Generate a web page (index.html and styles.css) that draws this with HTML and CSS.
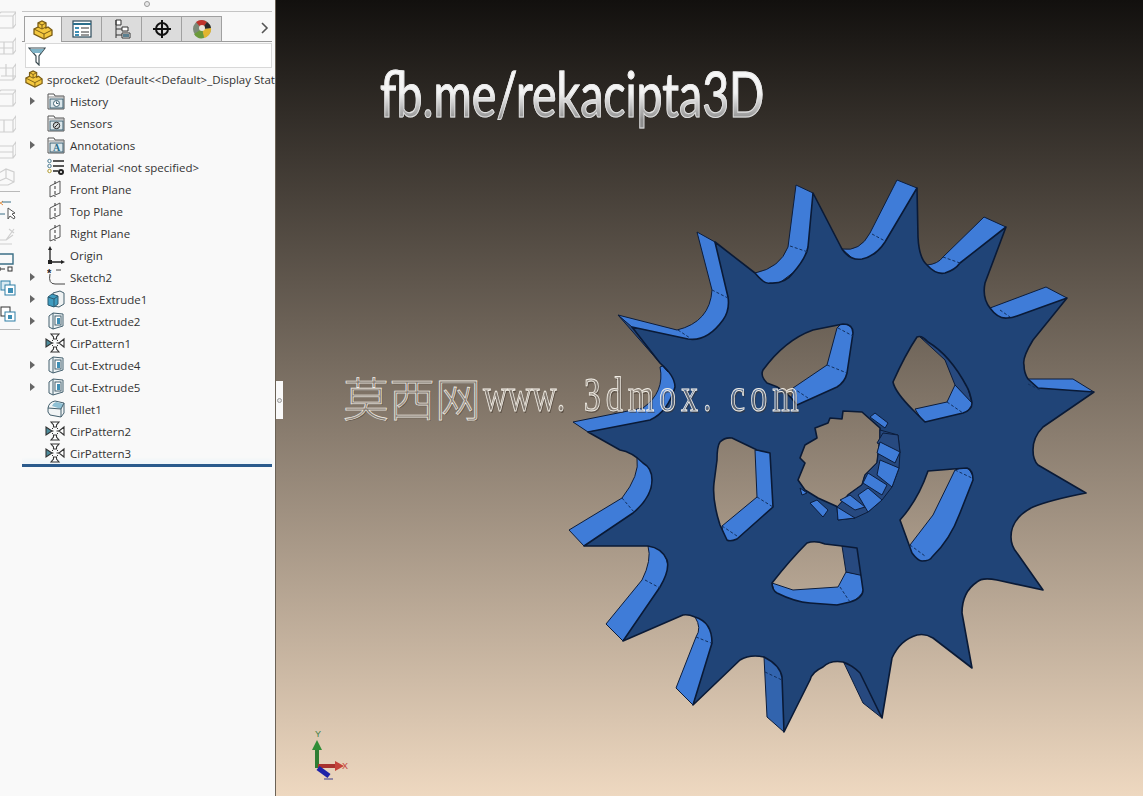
FILE: index.html
```html
<!DOCTYPE html>
<html lang="en">
<head>
    <meta charset="UTF-8">
    <title>sprocket2</title>
    <link rel="stylesheet" href="styles.css">
</head>
<body>
    <svg class="defs" width="0" height="0">
        <defs>
            <symbol id="ic-part" viewBox="0 0 20 20">
                <path d="M1 9 L5 7 L5 3 L9 1 L13 3 L13 8 L15 7 L19 10 L19 15 L11 19 L1 14 Z" fill="#f4c83f" stroke="#7a5c14" stroke-width="1.3"/>
                <path d="M5 7 L9 9 L13 7 M9 9 L9 5 L5 3 M9 5 L13 3 M1 9 L11 14 L19 10 M11 14 L11 19" fill="none" stroke="#7a5c14"/>
            </symbol>
            <symbol id="ic-folder" viewBox="0 0 18 18">
                <path d="M1 17 L1 2 L7 2 L8 4 L17 4 L17 17 Z" fill="#fbfbfb" stroke="#555"/>
                <path d="M1 5 L17 5" stroke="#888"/>
                <rect x="3" y="7" width="13" height="9" fill="#dbe6ea" stroke="#3b5f70"/>
            </symbol>
            <symbol id="ic-plane" viewBox="0 0 18 18">
                <path d="M3 6 L9 3 L13 1 L13 13 L3 17 Z" fill="none" stroke="#555"/>
                <path d="M8 1 L8 17" stroke="#333" stroke-dasharray="3 2"/>
            </symbol>
            <symbol id="ic-cut" viewBox="0 0 18 18">
                <path d="M2 4 L6 1 L16 2 L16 14 L6 17 L2 15 Z" fill="#eef3f5" stroke="#44606e"/>
                <path d="M6 1 L6 17" stroke="#44606e"/>
                <rect x="8" y="4" width="6" height="9" fill="#fff" stroke="#44606e"/>
                <rect x="10" y="6" width="3" height="6" fill="#3f8fb5"/>
            </symbol>
            <symbol id="ic-pattern" viewBox="0 0 20 20">
                <path d="M6 1 H14 L11.500 4 V6 H8.500 V4 Z M6 19 H14 L11.500 16 V14 H8.500 V16 Z M19 6 V14 L14 10 Z" fill="#fff" stroke="#333" stroke-width="1.1"/>
                <path d="M1 6 L1 14 L7 10 Z" fill="#4d8c9c" stroke="#333" stroke-width="1.1"/>
                <path d="M7 10 H8.500 M11.500 10 H14 M8 7 L7 8 M12 7 L13 8 M8 13 L7 12 M12 13 L13 12" stroke="#333"/>
            </symbol>
        </defs>
    </svg>

    <div class="app">
        <aside class="sidebar">
            <div class="strip">
                <div class="strip-group">
                    <svg class="strip-icon" viewBox="0 0 16 20"><path class="ghost" d="M-3 6 H13 V18 H-3 M-3 6 L1 2 H16 V14 L13 18 M13 6 L16 2"/></svg>
                    <svg class="strip-icon" viewBox="0 0 16 20"><path class="ghost" d="M-3 6 H13 V18 H-3 M4 6 V18 M-3 12 H13 M13 6 L16 2 V14 L13 18"/></svg>
                    <svg class="strip-icon" viewBox="0 0 16 20"><path class="ghost" d="M-3 6 H13 V18 H-3 M6 2 V14 M1 14 H16 M13 6 L16 2 V14 L13 18"/></svg>
                    <svg class="strip-icon" viewBox="0 0 16 20"><path class="ghost" d="M-3 6 H13 V18 H-3 M-3 6 L1 2 H16 V14 L13 18 M13 6 L16 2"/></svg>
                    <svg class="strip-icon" viewBox="0 0 16 20"><path class="ghost" d="M-3 6 H13 V18 H-3 M4 6 V18 M13 6 L16 2 V14 L13 18"/></svg>
                    <svg class="strip-icon" viewBox="0 0 16 20"><path class="ghost" d="M-3 6 H13 V18 H-3 M-3 12 H13 M13 6 L16 2 V14 L13 18"/></svg>
                    <svg class="strip-icon" viewBox="0 0 16 20"><path class="ghost" d="M-3 8 L6 3 L14 6 V16 L8 19 H-3 M6 3 V12 L14 16 M6 12 L-3 16"/></svg>
                </div>
                <div class="strip-sep"></div>
                <div class="strip-group">
                    <svg class="strip-icon" viewBox="0 0 16 20">
                        <path d="M-2 1 L3 5 M3 1 L-2 5" stroke="#e08a3c" fill="none"/>
                        <path d="M2 2 H11 M0 14 H5" stroke="#3b6f86" fill="none"/>
                        <path d="M8 8 L8 19 L10 16 L14 19 L15 17 L12 14 L15 13 Z" fill="#fff" stroke="#555"/>
                    </svg>
                    <svg class="strip-icon" viewBox="0 0 16 20"><path class="ghost" d="M-3 14 L6 14 L14 3 M6 14 L13 9 M-3 18 H12 M9 3 L14 7"/></svg>
                    <svg class="strip-icon" viewBox="0 0 16 20">
                        <path d="M-3 2 H13 V12 H-3" fill="none" stroke="#3b6f86" stroke-width="1.4"/>
                        <path d="M0 15 V19 M-2 17 H5" stroke="#333" fill="none"/>
                        <rect x="8" y="15" width="4" height="4" fill="none" stroke="#333"/>
                    </svg>
                    <svg class="strip-icon" viewBox="0 0 16 20">
                        <rect x="1" y="3" width="9" height="9" fill="#d9eaf2" stroke="#2f7fa6"/>
                        <rect x="5" y="7" width="10" height="10" fill="#fff" stroke="#2f7fa6"/>
                        <rect x="8" y="10" width="5" height="5" fill="#3f8fb5"/>
                    </svg>
                    <svg class="strip-icon" viewBox="0 0 16 20">
                        <rect x="1" y="3" width="9" height="9" fill="#fff" stroke="#333"/>
                        <rect x="5" y="8" width="10" height="9" fill="#fff" stroke="#2f7fa6"/>
                        <rect x="8" y="11" width="4" height="4" fill="#3f8fb5"/>
                    </svg>
                </div>
                <div class="strip-sep"></div>
            </div>

            <div class="manager">
                <div class="grip"><span class="grip-dot"></span></div>
                <div class="tabs">
                    <div class="tab tab-active"><svg class="tab-icon"><use href="#ic-part"/></svg></div>
                    <div class="tab">
                        <svg class="tab-icon" viewBox="0 0 20 20">
                            <rect x="1" y="2" width="18" height="16" fill="#fff" stroke="#2c4a5a" stroke-width="1.2"/>
                            <path d="M1 5 H19" stroke="#2c6f8c" stroke-width="2"/>
                            <path d="M3 8 H7 V10 H3 Z M3 12 H7 V14 H3 Z M3 15 H7 V17 H3 Z" fill="#3f8fb5"/>
                            <path d="M9 9 H17 M9 13 H17 M9 16 H17" stroke="#333"/>
                        </svg>
                    </div>
                    <div class="tab">
                        <svg class="tab-icon" viewBox="0 0 20 20">
                            <path d="M4 1 H9 V6 H4 Z M4 1 V19 M10 8 H16 V12 H10 Z M10 14 H18 V19 H10 Z M4 10 H10 M4 16 H10" fill="#fff" stroke="#333"/>
                            <rect x="11" y="15" width="6" height="3" fill="#5a7f90"/>
                        </svg>
                    </div>
                    <div class="tab">
                        <svg class="tab-icon" viewBox="0 0 20 20">
                            <circle cx="10" cy="10" r="6" fill="none" stroke="#111" stroke-width="2"/>
                            <path d="M10 1 V19 M1 10 H19" stroke="#111" stroke-width="2"/>
                        </svg>
                    </div>
                    <div class="tab">
                        <svg class="tab-icon" viewBox="0 0 20 20">
                            <circle cx="10" cy="10" r="9" fill="#7c8a78"/>
                            <path d="M10 10 L4 3 A9 9 0 0 1 15 3 Z" fill="#c0342c"/>
                            <path d="M10 10 L19 9 A9 9 0 0 1 12 19 Z" fill="#e2b52f"/>
                            <path d="M10 10 L12 19 A9 9 0 0 1 2 15 Z" fill="#6b9a3a"/>
                            <path d="M10 10 L15 3 A9 9 0 0 1 19 9 Z" fill="#2b2b2b"/>
                            <circle cx="10" cy="9" r="3" fill="#e9e4da"/>
                        </svg>
                    </div>
                    <svg class="tabs-more" viewBox="0 0 8 12"><path d="M1 1 L6 6 L1 11" fill="none" stroke="#555" stroke-width="1.6"/></svg>
                </div>
                <div class="filter">
                    <svg class="filter-icon" viewBox="0 0 18 20">
                        <path d="M1 2 H17 L11 10 V19 L8 16 V10 Z" fill="#fff" stroke="#3a4a50" stroke-width="1.2"/>
                        <path d="M2 3 H16 L13 7 H5 Z" fill="#7fb4c8"/>
                    </svg>
                </div>
                <div class="root-row">
                    <svg class="root-icon"><use href="#ic-part"/></svg>
                    <span class="root-name">sprocket2&nbsp; (Default&lt;&lt;Default&gt;_Display Stat</span>
                </div>
                <ul class="tree">
                    <li class="row has-kids">
                        <svg class="row-icon" viewBox="0 0 18 18"><use href="#ic-folder"/><circle cx="9.500" cy="11.500" r="3" fill="#fff" stroke="#3b5f70"/><path d="M9.500 9.500 V11.500 H11.500" fill="none" stroke="#3b5f70"/></svg>
                        <span>History</span>
                    </li>
                    <li class="row">
                        <svg class="row-icon" viewBox="0 0 18 18"><use href="#ic-folder"/><circle cx="9.500" cy="11.500" r="3.200" fill="#cfd5d6" stroke="#222"/><path d="M8 13 L11 10" stroke="#222"/></svg>
                        <span>Sensors</span>
                    </li>
                    <li class="row has-kids">
                        <svg class="row-icon" viewBox="0 0 18 18"><use href="#ic-folder"/><text x="6" y="15" class="glyph-a">A</text></svg>
                        <span>Annotations</span>
                    </li>
                    <li class="row">
                        <svg class="row-icon" viewBox="0 0 18 18">
                            <path d="M6 3 H17 M6 8 H17 M6 13 H11" stroke="#222" stroke-width="1.500"/>
                            <circle cx="2.500" cy="3" r="1.700" fill="#fff" stroke="#4a7a90"/>
                            <circle cx="2.500" cy="8" r="1.700" fill="#fff" stroke="#4a7a90"/>
                            <circle cx="2.500" cy="13" r="1.700" fill="#fff" stroke="#b09a30"/>
                            <circle cx="14" cy="14" r="3" fill="#222"/>
                            <circle cx="14" cy="14" r="1" fill="#fff"/>
                        </svg>
                        <span>Material &lt;not specified&gt;</span>
                    </li>
                    <li class="row"><svg class="row-icon"><use href="#ic-plane"/></svg><span>Front Plane</span></li>
                    <li class="row"><svg class="row-icon"><use href="#ic-plane"/></svg><span>Top Plane</span></li>
                    <li class="row"><svg class="row-icon"><use href="#ic-plane"/></svg><span>Right Plane</span></li>
                    <li class="row">
                        <svg class="row-icon" viewBox="0 0 18 18">
                            <path d="M3 16 V2 M3 16 H16" stroke="#222" stroke-width="1.300"/>
                            <path d="M3 0 L5 4 H1 Z M18 16 L14 14 V18 Z" fill="#222"/>
                            <rect x="1" y="14" width="4" height="4" fill="#222"/>
                        </svg>
                        <span>Origin</span>
                    </li>
                    <li class="row has-kids">
                        <svg class="row-icon" viewBox="0 0 18 18">
                            <path d="M3 6 Q1 16 8 16 H18 M9 2 H14" fill="none" stroke="#444"/>
                            <text x="0" y="9" class="glyph-star">*</text>
                        </svg>
                        <span>Sketch2</span>
                    </li>
                    <li class="row has-kids">
                        <svg class="row-icon" viewBox="0 0 18 18">
                            <path d="M6 3 L13 1 L17 3 V14 L12 17 L6 16 Z" fill="#eef1f2" stroke="#44606e"/>
                            <path d="M1 7 L5 4 L11 6 V14 L7 17 L1 15 Z" fill="#3f9cc0" stroke="#2c5a70"/>
                            <path d="M1 7 L7 9 L11 6 M7 9 V17" fill="none" stroke="#2c5a70"/>
                        </svg>
                        <span>Boss-Extrude1</span>
                    </li>
                    <li class="row has-kids"><svg class="row-icon"><use href="#ic-cut"/></svg><span>Cut-Extrude2</span></li>
                    <li class="row"><svg class="row-icon row-icon-wide"><use href="#ic-pattern"/></svg><span>CirPattern1</span></li>
                    <li class="row has-kids"><svg class="row-icon"><use href="#ic-cut"/></svg><span>Cut-Extrude4</span></li>
                    <li class="row has-kids"><svg class="row-icon"><use href="#ic-cut"/></svg><span>Cut-Extrude5</span></li>
                    <li class="row">
                        <svg class="row-icon" viewBox="0 0 18 18">
                            <path d="M1 8 Q2 2 8 1 L17 3 V13 L14 17 L3 15 L1 12 Z" fill="#f1f4f5" stroke="#44606e"/>
                            <path d="M5 6 Q6 3 9 2 L17 4 L14 9 Z" fill="#8fc0d4"/>
                            <path d="M1 8 L14 9 V17 M14 9 L17 3" fill="none" stroke="#44606e"/>
                        </svg>
                        <span>Fillet1</span>
                    </li>
                    <li class="row"><svg class="row-icon row-icon-wide"><use href="#ic-pattern"/></svg><span>CirPattern2</span></li>
                    <li class="row"><svg class="row-icon row-icon-wide"><use href="#ic-pattern"/></svg><span>CirPattern3</span></li>
                </ul>
                <div class="rollback"></div>
            </div>
        </aside>

        <main class="viewport">
            <div class="splitter"><span class="grip-dot"></span></div>

            <svg class="model" viewBox="276 0 867 796" width="867" height="796">
                <!-- tooth walls, under the front face -->
                <g class="walls">
                    <path class="wall" d="M796 185 L788 247 Q780 268 755 273 L770 290 L810 260 L813 193 Z"/>
                    <path class="wall" d="M697 232 L712 290 Q710 322 677 330 L618 315 L633 330 L700 345 L735 310 L715 242 Z"/>
                    <path class="wall" d="M842 249 Q860 252 870 233 L897 180 L917 188 L890 250 L860 265 Z"/>
                    <path class="wall" d="M927 265 Q938 264 943 257 L984 217 L1006 227 L965 270 L940 280 Z"/>
                    <path class="wall" d="M990 308 L1046 287 L1067 298 L1020 322 L1000 322 Z"/>
                    <path class="wall" d="M1028 379 L1073 379 L1094 392 L1040 392 Z"/>
                    <path class="wall-dark" d="M844 663 L863 703 L882 718 L862 670 Z"/>
                    <path class="wall-mid" d="M764 657 L767 717 L784 732 L786 680 L778 660 Z"/>
                    <path class="wall" d="M695 617 Q702 628 696 637 L676 688 L693 705 L716 640 Q712 620 695 612 Z"/>
                    <path class="wall" d="M648 546 Q652 560 642 580 L606 624 L623 641 L664 587 Q674 565 660 546 Z"/>
                    <path class="wall" d="M637 458 Q640 475 622 498 L569 530 L584 546 L636 515 Q658 495 655 470 L640 455 Z"/>
                    <path class="wall" d="M660 367 Q665 392 643 408 L573 422 L588 432 L652 422 Q675 410 678 385 L665 365 Z"/>
                    <path class="wall-dark" d="M618 315 L660 363 L668 372 L632 327 Z"/>
                    <!-- window walls -->
                    <path class="wall" d="M837 328 L827 365 L793 388 L790 410 L840 390 L850 373 L856 330 L843 322 Z"/>
                    <path class="wall" d="M915 409 L947 402 L955 385 L974 403 L963 416 L925 425 Z"/>
                    <path class="wall-dark" d="M920 337 L945 360 L955 385 L972 403 L967 385 L945 352 Z"/>
                    <path class="wall" d="M955 470 L933 515 L910 545 L908 556 L922 564 L936 557 L964 513 L976 480 L967 466 Z"/>
                    <path class="wall" d="M772 583 L793 590 L838 587 L846 572 L864 575 L866 590 L850 605 L810 606 L775 595 Z"/>
                    <path class="wall-dark" d="M842 546 L846 572 L864 576 L858 546 Z"/>
                    <path class="wall" d="M755 450 L757 497 L722 526 L724 542 L738 542 L776 507 L772 452 Z"/>
                </g>
                <path class="face" fill-rule="evenodd" d="M813 193 L842 249 Q850 261 862 259 Q876 256 885 242 L917 188 L918 237 Q919 258 927 265 Q936 275 945 273 Q955 270 960 263 L1006 227 L985 283 Q982 298 990 308 Q998 319 1007 318 Q1012 318 1017 316 L1067 298 L1033 340 Q1022 358 1024 365 Q1024 373 1028 379 L1038 388 L1094 392 L1043 427 Q1033 437 1033 450 Q1033 460 1038 465 L1086 493 Q1050 500 1033 507 Q1011 518 1011 537 Q1011 546 1017 553 L1043 590 L997 580 Q982 577 977 582 Q962 592 962 613 L972 668 L933 638 Q925 633 917 635 Q900 640 892 658 L882 718 L860 673 Q852 665 843 662 Q830 660 823 667 Q812 672 810 680 L784 732 L782 677 Q780 665 764 657 Q750 654 740 660 L693 705 L712 643 Q712 622 695 617 Q688 614 683 615 L623 641 L660 587 Q670 570 667 560 Q662 548 648 546 L584 546 L633 513 Q652 497 652 480 Q652 468 643 463 Q632 452 620 450 L588 432 L650 420 Q668 412 675 387 Q675 376 660 363 L632 327 L688 339 Q707 342 723 320 Q730 310 728 297 L715 242 L755 273 Q765 285 770 283 Q785 284 793 273 Q806 258 808 247 Z
                    M763 370 Q785 340 813 330 L843 324 Q853 324 853 333 L847 373 Q845 382 837 387 L797 405 Q785 388 767 383 Q760 376 763 370 Z
                    M917 337 Q905 355 893 382 Q895 392 913 410 L925 422 L963 413 Q972 410 972 403 Q970 392 967 387 Q950 355 928 342 Q922 335 917 337 Z
                    M928 471 Q918 500 900 520 L912 553 Q918 561 922 561 Q930 561 932 557 Q950 540 960 513 L973 480 Q973 470 967 468 L953 469 Z
                    M807 543 Q790 560 772 583 Q772 590 777 593 Q795 602 810 603 L837 605 L850 602 Q863 598 863 590 L857 548 L842 546 L825 544 Q815 540 807 543 Z
                    M717 460 Q717 446 720 442 Q725 437 732 438 L757 450 L770 453 L773 507 L737 539 Q730 542 727 540 L720 525 Q712 500 714 483 Z
                    M843 411 L842 419 L830 418 L828 423 L815 428 L817 438 L805 445 L800 458 L805 463 L798 480 L805 490 L818 498 L838 507 L848 495 L862 485 L865 475 L877 463 L880 438 L880 428 L862 412 Z"/>
                <!-- keyway teeth of the bore -->
                <g class="spline">
                    <path class="wall-dark" d="M880 430 L898 435 L900 452 L899 468 L892 487 L882 500 L868 512 L855 518 L838 520 L837 507 L848 495 L862 485 L865 475 L877 463 L880 440 Z"/>
                    <path class="wall" d="M870 417 L875 413 L888 423 L885 428 Z"/>
                    <path class="wall-dark" d="M883 433 L898 435 L900 453 L877 443 Z"/>
                    <path class="wall" d="M880 442 L900 452 L895 463 L877 453 Z"/>
                    <path class="wall" d="M880 460 L899 468 L892 487 L877 475 Z"/>
                    <path class="wall" d="M868 473 L887 485 L882 495 L863 483 Z"/>
                    <path class="wall" d="M858 495 L868 488 L882 500 L868 512 Z"/>
                    <path class="wall" d="M840 500 L850 495 L865 507 L855 510 Z"/>
                    <path class="wall" d="M837 507 L855 518 L838 520 Z"/>
                    <path class="wall" d="M810 503 L817 500 L828 510 L823 517 Z"/>
                    <path class="wall" d="M800 488 L807 493 L802 495 Z"/>
                </g>
                <path class="seams" d="M790 246 L808 252 M872 234 L885 241 M943 257 L960 263 M1000 310 L1010 317 M1028 384 L1040 390 M712 290 L728 298 M678 330 L690 338 M827 365 L847 373 M793 388 L808 398 M838 328 L853 336 M757 497 L773 507 M722 526 L737 536 M622 498 L634 512 M645 580 L660 588 M696 637 L711 643 M840 587 L850 602 M910 545 L925 556 M955 470 L972 478 M947 402 L963 413 M765 672 L782 680"/>
                <!-- axis triad -->
                <g class="triad">
                    <path d="M317 768 V746" stroke="#2f7d33" stroke-width="4"/>
                    <path d="M317 740 L322 750 H312 Z" fill="#2f8d36"/>
                    <path d="M318 766 H338" stroke="#a8322e" stroke-width="4"/>
                    <path d="M344 766 L335 761 V771 Z" fill="#c4423a"/>
                    <path d="M318 768 L329 776" stroke="#1e22a8" stroke-width="5"/>
                    <path d="M324 779 H333" stroke="#3a3a8a"/>
                    <text x="315" y="737" class="axis-y">Y</text>
                    <text x="342" y="769" class="axis-x">X</text>
                </g>
            </svg>

            <div class="logo-text">fb.me/rekacipta3D</div>
            <div class="site-mark"><span class="mark-cjk">莫西网</span><span class="mark-latin"><span class="mark-www">www</span>. 3dmox. com</span></div>
        </main>
    </div>
</body>
</html>
```

FILE: styles.css
```css
* {
    box-sizing: border-box;
}

body {
    margin: 0;
    font-family: "Open Sans", "Noto Sans", sans-serif;
    color: #333333;
    overflow: hidden;
}

.defs {
    position: absolute;
}

.app {
    display: grid;
    grid-template-columns: 276px 1fr;
    height: 796px;
}

.sidebar {
    display: flex;
    background: #f9f9f9;
    border-right: 1px solid #6b6256;
    overflow: hidden;
}

.strip {
    width: 22px;
    flex-shrink: 0;
    padding-top: 10px;
}

.strip-group {
    display: flex;
    flex-direction: column;
    gap: 6px;
}

.strip-icon {
    display: block;
    width: 16px;
    height: 20px;
}

.ghost {
    fill: none;
    stroke: #cfcfcf;
    stroke-width: 1.2;
}

.strip-sep {
    height: 1px;
    width: 20px;
    background: #b9b9b9;
    margin: 5px 0 8px;
}

.manager {
    width: 253px;
    flex-shrink: 0;
    overflow: hidden;
}

.grip {
    height: 12px;
    border-bottom: 1px solid #c4c4c4;
    width: 250px;
    display: flex;
    justify-content: center;
}

.grip-dot {
    display: block;
    width: 6px;
    height: 6px;
    margin-top: 1px;
    border-radius: 50%;
    background: #e8e8e8;
    border: 1px solid #9a9a9a;
}

.tabs {
    display: flex;
    align-items: stretch;
    width: 250px;
    height: 26px;
    margin-top: 4px;
    padding-left: 2px;
    border-bottom: 1px solid #9c9c9c;
    position: relative;
}

.tab {
    width: 40px;
    display: flex;
    align-items: center;
    justify-content: center;
    background: #dcdcdc;
    border-right: 1px solid #a0a0a0;
    border-top: 1px solid #a0a0a0;
}

.tab-active {
    width: 38px;
    background: #f9f9f9;
    border-left: 1px solid #a0a0a0;
    margin-bottom: -1px;
}

.tab-icon {
    width: 20px;
    height: 20px;
}

.tabs-more {
    width: 8px;
    height: 12px;
    margin: 6px 3px 0 auto;
}

.filter {
    width: 247px;
    height: 25px;
    margin: 1px 0 0 3px;
    background: #ffffff;
    border: 1px solid #d8d8d8;
    padding: 2px 0 0 2px;
}

.filter-icon {
    display: block;
    width: 18px;
    height: 20px;
}

.root-row {
    display: flex;
    align-items: center;
    height: 22px;
    padding-left: 3px;
    font-size: 11.5px;
    white-space: nowrap;
}

.root-icon {
    width: 18px;
    height: 18px;
    flex-shrink: 0;
    margin-right: 4px;
}

.tree {
    list-style: none;
    margin: 0;
    padding: 0;
}

.row {
    display: flex;
    align-items: center;
    height: 22px;
    padding-left: 25px;
    font-size: 11.5px;
    position: relative;
    white-space: nowrap;
}

.has-kids::before {
    content: "";
    position: absolute;
    left: 8px;
    top: 7px;
    border-left: 5px solid #666666;
    border-top: 4px solid transparent;
    border-bottom: 4px solid transparent;
}

.row-icon {
    width: 18px;
    height: 18px;
    flex-shrink: 0;
    margin-right: 5px;
}

.row-icon-wide {
    width: 20px;
    height: 20px;
    margin-left: -2px;
    margin-right: 5px;
}

.glyph-a {
    font: bold 10px "Liberation Serif", serif;
    fill: #2c6f8c;
}

.glyph-star {
    font: bold 11px "Liberation Sans", sans-serif;
    fill: #222222;
}

.rollback {
    width: 250px;
    height: 3px;
    background: #2a5a8c;
    box-shadow: 0 -3px 4px #e6f1f8;
}

.viewport {
    position: relative;
    overflow: hidden;
    background: linear-gradient(#12100e, #eed8c0);
}

.splitter {
    position: absolute;
    left: 0;
    top: 381px;
    width: 7px;
    height: 38px;
    background: #f9f9f9;
    display: flex;
    align-items: center;
    justify-content: center;
}

.splitter .grip-dot {
    margin: 0;
    width: 5px;
    height: 5px;
}

.model {
    display: block;
}

.wall {
    fill: #3f7cd8;
    stroke: #0c1d3c;
    stroke-width: 1;
}

.wall-mid {
    fill: #3264ae;
    stroke: #0c1d3c;
    stroke-width: 1;
}

.wall-dark {
    fill: #27497f;
    stroke: #0c1d3c;
    stroke-width: 1;
}

.face {
    fill: #204477;
    stroke: #0a1a36;
    stroke-width: 1.6;
    stroke-linejoin: round;
}

.seams {
    fill: none;
    stroke: #12305e;
    stroke-width: 1;
    stroke-dasharray: 3 2;
}

.axis-x,
.axis-y {
    font: 9px "Liberation Sans", sans-serif;
}

.axis-x {
    fill: #c4423a;
}

.axis-y {
    fill: #3c7d44;
}

.logo-text {
    position: absolute;
    left: 104px;
    top: 58px;
    font-family: Lato, sans-serif;
    font-size: 46.5px;
    font-weight: 400;
    line-height: 70px;
    white-space: nowrap;
    transform: scaleY(1.35);
    background: linear-gradient(#ffffff, #f2f2f2 50%, #8e8e8e 78%);
    -webkit-background-clip: text;
    background-clip: text;
    color: transparent;
    -webkit-text-stroke: 0.8px rgba(235, 235, 235, 0.85);
}

.site-mark {
    position: absolute;
    left: 67px;
    top: 368px;
    display: flex;
    align-items: center;
    white-space: nowrap;
    color: rgba(255, 255, 255, 0.22);
    -webkit-text-stroke: 0.7px #f2eee6;
    text-shadow: 1px 1px 0 rgba(60, 50, 40, 0.5);
}

.mark-cjk {
    font-family: "Noto Sans CJK SC", sans-serif;
    font-size: 46px;
    font-weight: 300;
    line-height: 56px;
}

.mark-latin {
    display: inline-block;
    font-family: "Liberation Serif", serif;
    font-size: 34px;
    letter-spacing: 5px;
    transform: scaleY(1.4);
    margin-left: 2px;
}

.mark-www {
    letter-spacing: 0;
}
```
